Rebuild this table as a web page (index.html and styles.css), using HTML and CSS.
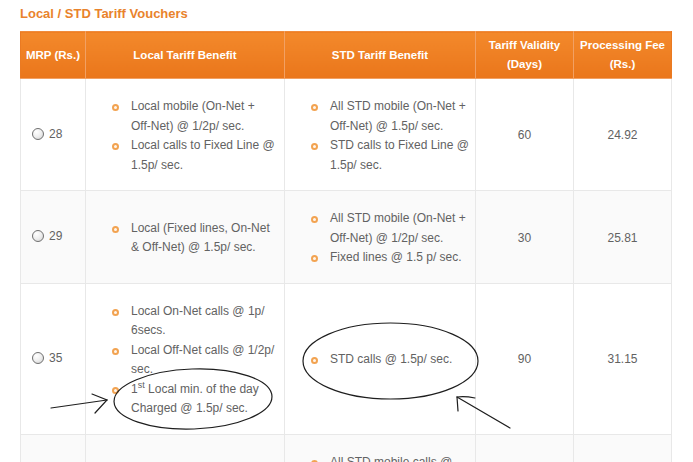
FILE: index.html
```html
<!DOCTYPE html>
<html lang="en">
<head>
<meta charset="utf-8">
<title>Local / STD Tariff Vouchers</title>
<link rel="stylesheet" href="styles.css">
</head>
<body>
<div class="page">
  <h2 class="title">Local / STD Tariff Vouchers</h2>
  <table class="tariff">
    <colgroup>
      <col class="c-mrp">
      <col class="c-local">
      <col class="c-std">
      <col class="c-valid">
      <col class="c-fee">
    </colgroup>
    <thead>
      <tr>
        <th>MRP (Rs.)</th>
        <th>Local Tariff Benefit</th>
        <th>STD Tariff Benefit</th>
        <th>Tariff Validity<br>(Days)</th>
        <th>Processing Fee<br>(Rs.)</th>
      </tr>
    </thead>
    <tbody>
      <tr>
        <td class="mrp"><label><span class="radio"></span>28</label></td>
        <td class="benefit">
          <ul>
            <li><span>Local mobile (On-Net +<br>Off-Net) @ 1/2p/ sec.</span></li>
            <li><span>Local calls to Fixed Line @<br>1.5p/ sec.</span></li>
          </ul>
        </td>
        <td class="benefit">
          <ul>
            <li><span>All STD mobile (On-Net +<br>Off-Net) @ 1.5p/ sec.</span></li>
            <li><span>STD calls to Fixed Line @<br>1.5p/ sec.</span></li>
          </ul>
        </td>
        <td class="num">60</td>
        <td class="num">24.92</td>
      </tr>
      <tr class="alt">
        <td class="mrp"><label><span class="radio"></span>29</label></td>
        <td class="benefit">
          <ul>
            <li><span>Local (Fixed lines, On-Net<br>&amp; Off-Net) @ 1.5p/ sec.</span></li>
          </ul>
        </td>
        <td class="benefit">
          <ul>
            <li><span>All STD mobile (On-Net +<br>Off-Net) @ 1/2p/ sec.</span></li>
            <li><span>Fixed lines @ 1.5 p/ sec.</span></li>
          </ul>
        </td>
        <td class="num">30</td>
        <td class="num">25.81</td>
      </tr>
      <tr>
        <td class="mrp"><label><span class="radio"></span>35</label></td>
        <td class="benefit">
          <ul>
            <li><span>Local On-Net calls @ 1p/<br>6secs.</span></li>
            <li><span>Local Off-Net calls @ 1/2p/<br>sec.</span></li>
            <li><span>1<sup>st</sup> Local min. of the day<br>Charged @ 1.5p/ sec.</span></li>
          </ul>
        </td>
        <td class="benefit">
          <ul>
            <li><span>STD calls @ 1.5p/ sec.</span></li>
          </ul>
        </td>
        <td class="num">90</td>
        <td class="num">31.15</td>
      </tr>
      <tr class="alt">
        <td class="mrp"><label><span class="radio"></span>49</label></td>
        <td class="benefit">
          <ul>
            <li><span>Local calls @ 1p/ sec.</span></li>
          </ul>
        </td>
        <td class="benefit">
          <ul>
            <li><span>All STD mobile calls @<br>1p/ sec.</span></li>
            <li><span>STD Fixed line calls @<br>1.5p/ sec.</span></li>
          </ul>
        </td>
        <td class="num">90</td>
        <td class="num">43.61</td>
      </tr>
    </tbody>
  </table>

  <svg class="marks" width="693" height="462" viewBox="0 0 693 462" aria-hidden="true">
    <g fill="none" stroke="#1e1e1e" stroke-width="1.2" stroke-linecap="round">
      <ellipse cx="193" cy="399" rx="79" ry="30" transform="rotate(-2 193 399)"/>
      <ellipse cx="390.5" cy="361" rx="87.5" ry="38"/>
      <path d="M51 408 L107 400"/>
      <path d="M92 394 L107 400 L95 413"/>
      <path d="M510 428 L457 397"/>
      <path d="M475 398 Q465 396 457 397 L458 411"/>
    </g>
  </svg>
</div>
</body>
</html>
```
FILE: styles.css
```css
html, body {
  margin: 0;
  padding: 0;
  background: #ffffff;
}

.page {
  position: relative;
  width: 693px;
  height: 462px;
  overflow: hidden;
  padding: 5px 20px 0;
  box-sizing: border-box;
  font-family: "Liberation Sans", Arial, sans-serif;
  font-size: 12px;
  color: #626262;
}

.title {
  margin: 0 0 8px;
  font-size: 13px;
  line-height: 18px;
  font-weight: bold;
  color: #e9832c;
}

.tariff {
  width: 651px;
  border-collapse: collapse;
  table-layout: fixed;
}

.c-mrp { width: 65px; }
.c-local { width: 199px; }
.c-std { width: 191px; }
.c-valid { width: 98px; }
.c-fee { width: 98px; }

.tariff th {
  background: linear-gradient(#f3892b, #ea761b);
  color: #ffffff;
  font-size: 11.5px;
  font-weight: bold;
  line-height: 19px;
  padding: 4px 2px;
  text-align: center;
  vertical-align: middle;
  border: 1px solid #f2a063;
  border-top-color: #ef8b3c;
}

.tariff th:first-child { border-left-color: #ea7a22; }
.tariff th:last-child { border-right-color: #ea7a22; }

.tariff td {
  border: 1px solid #e8e8e8;
  padding: 18px 0 15px;
  line-height: 19.5px;
  vertical-align: middle;
  background: #ffffff;
}

.tariff tr.alt td {
  background: #fafafa;
}

.tariff td.mrp {
  padding-left: 11px;
}

.mrp label {
  display: inline-flex;
  align-items: center;
  gap: 5px;
}

.radio {
  display: inline-block;
  width: 10px;
  height: 10px;
  border: 1px solid #707070;
  border-radius: 50%;
  background: radial-gradient(circle at 35% 30%, #ffffff 0%, #eeeeee 50%, #cfcfcf 100%);
  position: relative;
  top: -1px;
}

.benefit ul {
  list-style: none;
  margin: 0;
  padding: 0 0 0 26px;
}

.benefit li {
  display: flex;
  white-space: nowrap;
}

.benefit li::before {
  content: "";
  flex: none;
  width: 3px;
  height: 3px;
  margin: 7px 12px 0 0;
  border: 2px solid #f2a351;
  border-radius: 50%;
  background: #fff6ec;
}

.benefit sup {
  font-size: 9px;
  line-height: 0;
  vertical-align: 5px;
}

.num {
  text-align: center;
}

.marks {
  position: absolute;
  left: 0;
  top: 0;
  pointer-events: none;
}
```
